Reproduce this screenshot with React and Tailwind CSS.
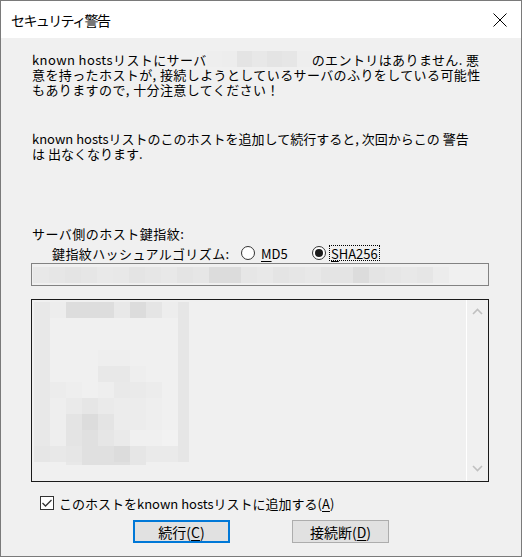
import React from "react";

const S = {
  dc: "bg-[#dcdcdc]",
  dd: "bg-[#dddddd]",
  e0: "bg-[#e0e0e0]",
  e4: "bg-[#e4e4e4]",
  e5: "bg-[#e5e5e5]",
  e6: "bg-[#e6e6e6]",
  e8: "bg-[#e8e8e8]",
  e9: "bg-[#e9e9e9]",
  ea: "bg-[#eaeaea]",
  ec: "bg-[#ececec]",
  ed: "bg-[#ededed]",
  ee: "bg-[#eeeeee]",
  f0: "bg-[#f0f0f0]",
  f2: "bg-[#f2f2f2]",
};

const IMG = [
  "e8 ed dd dd dd e8 dc e5 ed e6",
  "e8 f0 f0 f0 f0 f0 f0 f0 f0 e6",
  "e8 f0 f0 f0 f0 f0 f0 f0 f0 e6",
  "e8 f0 f0 f0 ee ee f0 f0 f0 e6",
  "e8 f0 f0 f0 e8 e8 ee f0 f0 e6",
  "e8 ec ee f0 ee e9 ea ec f0 e6",
  "e8 ee ea e6 ea ec ec ee f0 e6",
  "e8 ee e4 dc e4 ec ec ee f0 e6",
  "e8 ee e4 e0 e6 ea f0 f0 f2 e6",
  "e6 e8 e6 e0 e0 dc e6 ea ea e6",
].map((r) => r.split(" "));

const FIELD = "e8 e6 e4 e6 e9 e8 e4 e6 e8 e4 e6 dc dc e6 e8 e4 e6 e8 e4 e4 dc e4 e6 e8 e6 ec".split(" ");
const HOST = "ee ed e4 e8 e4 e6 ee".split(" ");

function Chevron({ up }) {
  return (
    <svg width="11" height="7" viewBox="0 0 11 7">
      <path
        d={up ? "M1 6 L5.5 1.5 L10 6" : "M1 1 L5.5 5.5 L10 1"}
        fill="none"
        stroke="#c0c0c0"
        strokeWidth="1.6"
      />
    </svg>
  );
}

export default function App() {
  return (
    <div className="w-[522px] h-[557px] border border-[#7a7a7a] bg-[#f0f0f0] flex flex-col text-black font-['Noto_Sans_CJK_JP','Noto_Sans',sans-serif] overflow-hidden">
      {/* title bar */}
      <div className="h-[37px] bg-white flex items-center justify-between pl-[10px] pr-[14px] shrink-0">
        <span className="text-[14px] tracking-[-1.6px] leading-none">セキュリティ警告</span>
        <svg width="14" height="14" viewBox="0 0 14 14">
          <path d="M0.5 0.5 L13.5 13.5 M13.5 0.5 L0.5 13.5" stroke="#000" strokeWidth="1" />
        </svg>
      </div>

      <div className="flex flex-col pl-[30px] pr-[32px]">
        {/* paragraph 1 */}
        <p className="mt-[13px] pl-[1px] text-[13px] leading-[15px] tracking-[0.4px] whitespace-nowrap">
          known hostsリストにサーバ
          <span className="inline-flex align-[-2px] h-[16px] w-[105px] mx-[0px]">
            {HOST.map((c, i) => (
              <span key={i} className={`h-full w-[15px] ${S[c]}`} />
            ))}
          </span>
          のエントリはありません. 悪
          <br />
          意を持ったホストが, 接続しようとしているサーバのふりをしている可能性
          <br />
          もありますので, 十分注意してください！
        </p>

        {/* paragraph 2 */}
        <p className="mt-[34px] pl-[1px] text-[13px] leading-[15px] whitespace-nowrap">
          known hostsリストのこのホストを追加して続行すると, 次回からこの 警告
          <br />
          は 出なくなります.
        </p>

        {/* fingerprint heading */}
        <p className="mt-[65px] pl-[1px] text-[13px] leading-[15px] tracking-[0.5px] whitespace-nowrap">
          サーバ側のホスト鍵指紋:
        </p>

        {/* algorithm row */}
        <div className="mt-[4px] h-[16px] flex items-center pl-[21px] text-[13px] whitespace-nowrap">
          <span className="w-[189px] tracking-[0.4px] leading-none">鍵指紋ハッシュアルゴリズム:</span>
          <div className="w-[71px] flex items-center">
            <span className="w-[14px] h-[14px] rounded-full border border-[#333333] bg-white" />
            <span className="ml-[6px] leading-none">
              <span className="underline underline-offset-2">M</span>D5
            </span>
          </div>
          <div className="flex items-center">
            <span className="w-[14px] h-[14px] rounded-full border border-[#333333] bg-white flex items-center justify-center">
              <span className="w-[8px] h-[8px] rounded-full bg-[#1a1a1a]" />
            </span>
            <span className="ml-[3px] px-[1px] h-[16px] flex items-center border border-dotted border-black leading-none">
              <span className="underline underline-offset-2">S</span>HA256
            </span>
          </div>
        </div>

        {/* fingerprint field */}
        <div className="mt-[2px] h-[23px] border border-[#828282] bg-[#f0f0f0] flex items-center pl-[1px]">
          <div className="flex h-[16px]">
            {FIELD.map((c, i) => (
              <span key={i} className={`h-full w-[16px] ${S[c]}`} />
            ))}
          </div>
        </div>

        {/* randomart box */}
        <div className="mt-[13px] h-[183px] border border-[#1a1a1a] flex">
          <div className="flex-1 pl-[2px] pt-[2px]">
            <div className="grid grid-cols-[16px_16px_16px_16px_16px_16px_16px_16px_16px_11px]">
              {IMG.flat().map((c, i) => (
                <span key={i} className={`h-[16px] ${S[c]}`} />
              ))}
            </div>
            <div className="flex ml-[32px]">
              <span className="w-[16px] h-[3px] bg-[#e8e8e8]" />
              <span className="w-[48px] h-[3px] bg-[#e0e0e0]" />
              <span className="w-[16px] h-[3px] bg-[#e6e6e6]" />
            </div>
          </div>
          <div className="w-[22px] border-l border-white bg-[#f0f0f0] flex flex-col items-center justify-between pt-[8px] pb-[9px]">
            <Chevron up />
            <Chevron />
          </div>
        </div>

        {/* checkbox */}
        <div className="mt-[13px] h-[16px] flex items-center pl-[9px] text-[13px] whitespace-nowrap">
          <span className="w-[14px] h-[14px] border border-[#333333] bg-white flex items-center justify-center">
            <svg width="12" height="12" viewBox="0 0 12 12">
              <path d="M1.5 6 L4.5 9 L10.5 3" fill="none" stroke="#333" strokeWidth="1.3" />
            </svg>
          </span>
          <span className="ml-[5px] leading-none">
            このホストをknown hostsリストに追加する(<span className="underline underline-offset-2">A</span>)
          </span>
        </div>

        {/* buttons */}
        <div className="mt-[9px] flex pl-[102px] gap-[62px] text-[14px]">
          <button className="w-[97px] h-[23px] border-2 border-[#0078d7] bg-[#e1e1e1] flex items-center justify-center leading-none">
            続行(<span className="underline underline-offset-2">C</span>)
          </button>
          <button className="w-[97px] h-[23px] border border-[#adadad] bg-[#e1e1e1] flex items-center justify-center leading-none">
            接続断(<span className="underline underline-offset-2">D</span>)
          </button>
        </div>
      </div>
    </div>
  );
}
